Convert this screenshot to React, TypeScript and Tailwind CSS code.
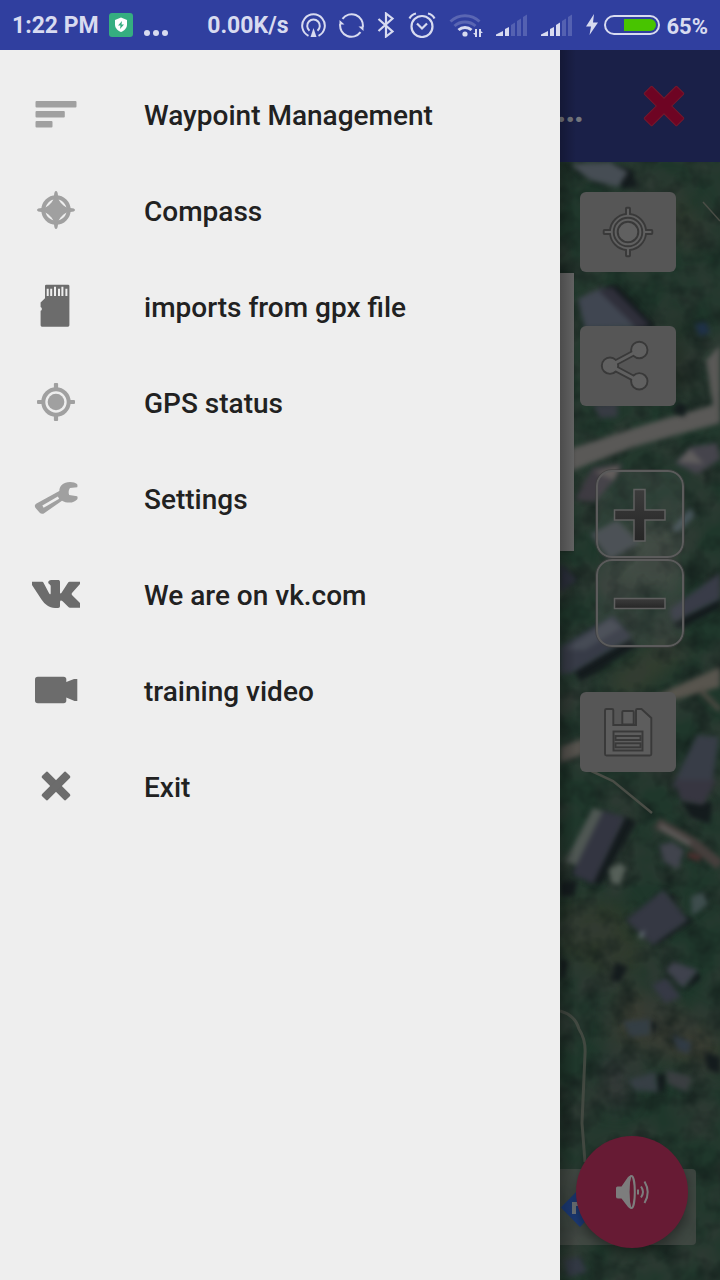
import type { ReactNode } from "react";

type MenuItem = {
  label: string;
  icon: ReactNode;
};

function MenuIcon({ dark = false, children }: { dark?: boolean; children: ReactNode }) {
  return (
    <svg
      aria-hidden="true"
      viewBox="0 0 48 48"
      className={dark ? "size-12 text-[#6c6c6c]" : "size-12 text-[#a0a0a0]"}
      fill="currentColor"
    >
      {children}
    </svg>
  );
}

const menuItems: MenuItem[] = [
  {
    label: "Waypoint Management",
    icon: (
      <MenuIcon>
        <rect x="3.5" y="11" width="41" height="6.5" rx="1" />
        <rect x="3.5" y="21" width="29.3" height="6.5" rx="1" />
        <rect x="3.5" y="31" width="17" height="6.5" rx="1" />
      </MenuIcon>
    ),
  },
  {
    label: "Compass",
    icon: (
      <MenuIcon>
        <circle cx="24" cy="24" r="12.7" fill="none" stroke="currentColor" strokeWidth="4" />
        <path d="M24 5q1.800 0 2 5 .4 4.500 2.500 6.500l3 3q2 2.100 6.500 2.500 5 .2 5 2t-5 2q-4.500.4-6.500 2.500l-3 3q-2.100 2-2.500 6.500-.2 5-2 5t-2-5q-.4-4.500-2.500-6.500l-3-3q-2-2.100-6.500-2.500-5-.2-5-2t5-2q4.500-.4 6.500-2.500l3-3q2.100-2 2.500-6.500.2-5 2-5z" />
      </MenuIcon>
    ),
  },
  {
    label: "imports from gpx file",
    icon: (
      <MenuIcon dark>
        <path d="M14.500 2.700H36a1.400 1.400 0 0 1 1.400 1.400V43.300a1.400 1.400 0 0 1-1.400 1.400H10a1.400 1.400 0 0 1-1.400-1.400V28.700a1.900 1.900 0 0 0 0-3.600V20.500L13 16.300V4.100a1.400 1.400 0 0 1 1.500-1.400z" />
        <path
          d="M15.700 6.700V14M19.200 6.700V14M23 4.700V14M27 6.700V14M30.400 4.700V14M34.400 6.700V14"
          stroke="#eeeeee"
          strokeWidth="2"
        />
      </MenuIcon>
    ),
  },
  {
    label: "GPS status",
    icon: (
      <MenuIcon>
        <circle cx="24" cy="24" r="12.7" fill="none" stroke="currentColor" strokeWidth="4" />
        <circle cx="24" cy="24" r="8.300" />
        <rect x="21.900" y="5" width="4.200" height="6" rx="1" />
        <rect x="21.900" y="37" width="4.200" height="6" rx="1" />
        <rect x="5" y="21.900" width="6" height="4.200" rx="1" />
        <rect x="37" y="21.900" width="6" height="4.200" rx="1" />
      </MenuIcon>
    ),
  },
  {
    label: "Settings",
    icon: (
      <MenuIcon>
        <path d="M38 8c3 0 5.500.7 7 2 .6.800.6 2.400.2 3.300L38 14c-1.400 1.800-1.800 5-.8 7l8 1.200c.6.900.5 2.400-.1 3.300-2 2-4.600 3.100-7.500 3.100-3.200 0-5.400-.7-7.600-1.900L12.500 39c-1.800 1.300-3.500 1.100-5-.5L3.600 34c-1.300-1.700-.9-3.400.9-4.500L27.300 17C27.500 11.500 31.500 8 38 8z" />
        <path d="M11 32.700L26.500 23.600" stroke="#eeeeee" strokeWidth="2.600" />
      </MenuIcon>
    ),
  },
  {
    label: "We are on vk.com",
    icon: (
      <MenuIcon dark>
        <path d="M0 11.700h10.200c.7 0 1 .4 1.300 1l5.300 10.100c.9 1.700 1.900 2.200 1.900.2v-7c0-1.500-2.500-2-2.500-3.500 0-1.400 1.200-2.500 3-2.500h6.500c1.500 0 2.300.5 2.300 2v10.400c0 1.400.8 1.500 1.700.2l6.300-9.900c.4-.7.9-1 1.600-1H48V14l-7.800 8.800c-.8 1-.8 1.600 0 2.500L48 33v4.700h-9.500c-1 0-1.600-.3-2.300-1l-5.600-5.500c-1.300-1.200-2.600-1-2.600 1V36c0 1.200-.6 1.900-2 1.900h-3C17 37.900 13 34.500 9.500 29.500L0 15z" />
      </MenuIcon>
    ),
  },
  {
    label: "training video",
    icon: (
      <MenuIcon dark>
        <rect x="3" y="10.700" width="31.300" height="26.600" rx="2.800" />
        <path d="M33 16.400l9-3.300a3 3 0 0 1 1-.2h2.300V35H43a3 3 0 0 1-1-.2L33 31z" />
      </MenuIcon>
    ),
  },
  {
    label: "Exit",
    icon: (
      <MenuIcon dark>
        <g transform="rotate(45 24 24)">
          <rect x="7" y="19.800" width="34" height="8.400" rx="1.600" />
          <rect x="19.800" y="7" width="8.400" height="34" rx="1.600" />
        </g>
      </MenuIcon>
    ),
  },
];

function SignalBars({ active }: { active: number }) {
  const bars = [
    "M0 22v-1.500L7 17v5z",
    "M9 22v-7l4-2v9z",
    "M15 22V11l4-2.500V22z",
    "M21 22V7l4-2.500V22z",
    "M27 22V3l4-2.500V22z",
  ];
  return (
    <svg aria-hidden="true" viewBox="0 0 32 22" className="h-[22px] w-8" fill="currentColor">
      {bars.map((d, i) => (
        <path key={d} d={d} opacity={i < active ? 1 : 0.22} />
      ))}
    </svg>
  );
}

function StatusBar() {
  return (
    <header className="flex h-[50px] shrink-0 items-center bg-[#303f9f] px-3 text-[23px] font-bold text-[#d8dbf0]">
      <span className="pt-[3px]">1:22 PM</span>
      <svg aria-hidden="true" viewBox="0 0 24 24" className="ml-[10px] size-6">
        <rect width="24" height="24" rx="3" fill="#35ae80" />
        <path d="M12 4.500l6 2.500v4.500c0 3.500-2.500 6-6 7.500-3.500-1.500-6-4-6-7.500V7z" fill="#ffffff" />
        <path d="M13 8l-4 4.500h2.500L11 16l4-4.500h-2.500z" fill="#35ae80" />
      </svg>
      <svg aria-hidden="true" viewBox="0 0 26 24" className="ml-[10px] h-6 w-[26px]" fill="currentColor">
        <circle cx="4" cy="20" r="3" />
        <circle cx="13" cy="20" r="3" />
        <circle cx="22" cy="20" r="3" />
      </svg>

      <div className="ml-auto flex items-center gap-[13px]">
        <span className="pt-[3px]">0.00K/s</span>
        <svg aria-hidden="true" viewBox="0 0 25 25" className="size-[25px]" fill="none" stroke="currentColor" strokeWidth="2">
          <path d="M7.500 22.800a11.300 11.300 0 1 1 10 0" />
          <path d="M8.500 17.700a6.300 6.300 0 1 1 8 0" />
          <path d="M12.500 15l3 9h-6z" fill="currentColor" stroke="none" />
        </svg>
        <svg aria-hidden="true" viewBox="0 0 25 25" className="size-[25px]" fill="none" stroke="currentColor" strokeWidth="2">
          <path d="M3.500 5.800a11.300 11.300 0 0 1 20.300 8.200" />
          <path d="M21.500 19.200A11.300 11.300 0 0 1 1.200 11" />
          <path d="M19.500 13.500h5V18zM5.500 11.500h-5V7z" fill="currentColor" stroke="none" />
        </svg>
        <svg aria-hidden="true" viewBox="0 0 18 26" className="h-[26px] w-[18px]" fill="none" stroke="currentColor" strokeWidth="2.200">
          <path d="M1.500 7l14 12.500L9 24.500v-23l6.500 5L1.500 19" />
        </svg>
        <svg aria-hidden="true" viewBox="0 0 28 26" className="h-[26px] w-7" fill="none" stroke="currentColor" strokeWidth="2.200">
          <circle cx="14" cy="14.500" r="10.500" />
          <path d="M9 11.500l5 5 5-5M1.500 6.500Q3.500 2.500 8 1.500M26.500 6.500Q24.500 2.500 20 1.500" />
        </svg>
        <svg aria-hidden="true" viewBox="0 0 34 26" className="h-[26px] w-[34px]" fill="none" stroke="currentColor" strokeWidth="3">
          <path d="M1.500 9.500a21.500 21.500 0 0 1 29 0M5.500 14a15.500 15.500 0 0 1 21 0" opacity="0.25" />
          <path d="M9.500 18a9.500 9.500 0 0 1 13 0" />
          <circle cx="16" cy="22" r="2.600" fill="currentColor" stroke="none" />
          <path d="M27 17v8M31 17v8" strokeWidth="2" />
          <path d="M24 21h3v3zM34 21h-3v-3z" fill="currentColor" stroke="none" />
        </svg>
        <SignalBars active={2} />
        <SignalBars active={3} />
        <div className="flex items-center gap-[6px]">
          <svg aria-hidden="true" viewBox="0 0 12 22" className="h-[22px] w-3" fill="currentColor">
            <path d="M8 0L0 12.500h5L3.500 21 12 8.500H7z" />
          </svg>
          <svg aria-hidden="true" viewBox="0 0 56 20" className="h-5 w-14">
            <rect x="1" y="1" width="54" height="18" rx="9" fill="none" stroke="currentColor" strokeWidth="2" />
            <path d="M20 4h26a6 6 0 0 1 0 12H20z" fill="#48c400" />
          </svg>
          <span className="pt-[3px] text-[22px]">65%</span>
        </div>
      </div>
    </header>
  );
}

/* Aerial imagery under the controls, already dimmed by the open drawer. */
function SatelliteMap() {
  return (
    <svg
      aria-hidden="true"
      viewBox="0 0 160 1118"
      preserveAspectRatio="xMidYMin slice"
      className="absolute inset-0 size-full"
    >
      <defs>
        <filter id="soft" x="-20%" y="-20%" width="140%" height="140%" colorInterpolationFilters="sRGB">
          <feGaussianBlur stdDeviation="2.4" />
        </filter>
        <filter id="haze" x="-50%" y="-50%" width="200%" height="200%" colorInterpolationFilters="sRGB">
          <feGaussianBlur stdDeviation="10" />
        </filter>
        <filter id="foliage" x="0" y="0" width="100%" height="100%" colorInterpolationFilters="sRGB">
          <feTurbulence type="fractalNoise" baseFrequency="0.04" numOctaves="3" seed="8" />
          <feColorMatrix values="0 0 0 0 0.07  0 0 0 0 0.11  0 0 0 0 0.1  1.500 0 0 0 -0.62" />
        </filter>
        <filter id="clearing" x="0" y="0" width="100%" height="100%" colorInterpolationFilters="sRGB">
          <feTurbulence type="fractalNoise" baseFrequency="0.025" numOctaves="3" seed="21" />
          <feColorMatrix values="0 0 0 0 0.2  0 0 0 0 0.23  0 0 0 0 0.21  0 1.600 0 0 -0.55" />
        </filter>
      </defs>
      <rect width="160" height="1118" fill="#1f372b" />
      <g filter="url(#haze)">
        <path d="M60 360h60v70H50z" fill="#3a473d" />
        <path d="M40 520l70-50 20 20-60 50z" fill="#343e30" />
        <path d="M0 740h60l30 60-40 20-50-30z" fill="#2f3a2b" />
        <path d="M60 820l100 50v40L50 880z" fill="#3a3c31" />
        <path d="M40 895h30v50H45z" fill="#353839" />
        <path d="M110 20l40 50-20 20-40-30z" fill="#2f3a2e" />
        <path d="M115 140l20 90h-30z" fill="#232a22" />
      </g>
      <rect width="160" height="1118" filter="url(#clearing)" />
      <rect width="160" height="1118" filter="url(#foliage)" />

      {/* roads and paths */}
      <g filter="url(#soft)">
        <path d="M0 290L90 261 153 243 146 198 160 183V261L73 285 14 308 0 311z" fill="#5a5957" />
        <path d="M88 537L160 505V525L117 537z" fill="#58554e" />
        <path d="M140 528L160 548" stroke="#4d4a43" strokeWidth="5" />
        <path d="M0 585L24 576V592L0 601z" fill="#55524d" />
        <path d="M97 661L133 681 160 703" fill="none" stroke="#463f3d" strokeWidth="11" />
        <path d="M100 664L130 682" stroke="#5c5a58" strokeWidth="5" />
        <path d="M128 692l12 5" stroke="#553030" strokeWidth="5" />
      </g>
      <g fill="none" stroke="#4a4d46">
        <path d="M25 606L53 619 92 651" strokeWidth="2.500" />
        <path d="M143 40L160 59" strokeWidth="1.500" />
        <path d="M0 849Q15 853 19 867 26 878 25 892L22 961 25 1000" strokeWidth="3" opacity="0.8" />
      </g>

      {/* shadows */}
      <g filter="url(#soft)" fill="#141b1d">
        <path d="M50 2L72 8 78 25 62 27z" />
        <path d="M44 125L58 123 96 165 80 168z" />
        <path d="M14 508L70 476 76 485 20 520z" />
        <path d="M113 460L160 436V446L118 468z" />
        <path d="M64 654L76 660 40 724 30 718z" />
        <path d="M122 640L152 640 150 662 130 655z" />
        <path d="M0 720L18 718 14 734 0 735z" />
        <path d="M104 728L116 735 114 742z" />
        <path d="M127 757L135 757 97 782 92 779z" />
        <path d="M137 808L141 817 123 830z" />
        <path d="M0 795L8 800 4 815 0 818z" />
        <path d="M55 800L68 805 60 820 52 818z" />
        <path d="M90 858L97 862 93 876z" />
        <path d="M97 912L107 912 103 930 96 928z" />
        <path d="M145 890L160 895V912L147 907z" />
        <path d="M118 240L127 244 124 255 113 250z" />
      </g>

      {/* buildings */}
      <g filter="url(#soft)">
        <path d="M10 2L50 0 68 10 58 25 30 18z" fill="#464d54" />
        <path d="M18 137L43 125 83 165 25 167z" fill="#404651" />
        <path d="M38 128L52 125 90 163 78 167z" fill="#2f2f3a" />
        <path d="M135 162L146 160 150 171 139 174z" fill="#1f3147" />
        <path d="M33 243L57 240 58 255 40 256z" fill="#373b43" />
        <path d="M15 338L33 305 63 302 56 316 35 340z" fill="#3e3b42" />
        <path d="M34 310L60 303 54 318z" fill="#605b59" />
        <path d="M115 301L130 285 157 281 160 297 137 312z" fill="#45444c" />
        <path d="M118 300L130 287 144 302z" fill="#5f5d5d" />
        <path d="M30 372L57 358 79 381 50 398z" fill="#454b50" />
        <path d="M111 367L130 346 135 354 118 370z" fill="#465459" />
        <path d="M110 447L160 411V437L113 460z" fill="#393c48" />
        <path d="M0 401L17 418 0 430z" fill="#2b2f3b" />
        <path d="M0 485L53 453 72 475 12 511 0 512z" fill="#373b47" />
        <path d="M5 487L50 457 62 465 25 488z" fill="#464b55" />
        <path d="M112 625L137 573 159 575 151 630z" fill="#383d47" />
        <path d="M5 700L33 646 46 650 22 705z" fill="#4f5753" />
        <path d="M43 649L65 655 33 722 12 712z" fill="#333541" />
        <path d="M49 707L60 701 66 706 60 723 51 721z" fill="#566059" />
        <path d="M115 618L156 618 143 643 121 638z" fill="#373641" />
        <path d="M99 683L112 680 124 688 118 707 104 700z" fill="#41444d" />
        <path d="M66 758L103 728 128 758 93 783z" fill="#353843" />
        <path d="M78 773L85 768 82 777z" fill="#6b767c" />
        <path d="M131 735L143 730 148 742 132 754z" fill="#3e4d4d" />
        <path d="M106 808L113 800 138 808 123 826z" fill="#3f424d" />
        <path d="M92 823L106 816 121 835 105 841z" fill="#363945" />
        <path d="M63 859L90 857 90 873 70 875z" fill="#343e44" />
        <path d="M68 918L95 910 98 930 75 928z" fill="#373f45" />
        <path d="M106 908L132 915 127 930 108 922z" fill="#3a3e41" />
        <path d="M112 873L131 880 129 892 118 888z" fill="#313b45" />
        <path d="M4 1098L20 1095 27 1110 8 1115z" fill="#323843" />
      </g>
    </svg>
  );
}

const tileClass =
  "flex h-20 w-24 items-center justify-center rounded-md bg-[#565656]";
const zoomClass =
  "ml-4 size-[88px] rounded-2xl border-2 border-[#5b5b5b] bg-[#7a7a7a]/15 outline outline-[#3c3c3c]/60";

function ZoomIcon({ plus = false }: { plus?: boolean }) {
  const id = plus ? "zoom-in-fill" : "zoom-out-fill";
  return (
    <svg aria-hidden="true" viewBox="2 2 84 84" className="size-full">
      <defs>
        <linearGradient id={id} x1="0" y1="0" x2="0" y2="1">
          <stop offset="0" stopColor="#3c3c3c" />
          <stop offset="1" stopColor="#262626" />
        </linearGradient>
      </defs>
      <path
        d={plus ? "M38 19.500h11V40h20v10H49v21H38V50H18.500V40H38z" : "M18.500 39.500H69v10H18.500z"}
        fill={`url(#${id})`}
        stroke="#5f5f5f"
        strokeWidth="1.500"
      />
    </svg>
  );
}

function MapControls() {
  return (
    <div className="relative flex flex-col px-5 pt-[30px]">
      <button type="button" aria-label="My location" className={tileClass}>
        <svg aria-hidden="true" viewBox="0 0 52 52" className="size-[52px]" fill="#606060" stroke="#393939" strokeWidth="1.900">
          <path d="M24 8V2.500q0-.8.800-.8h2.400q.8 0 .8.800V8A18.300 18.300 0 0 1 44 24h5.500q.8 0 .8.800v2.400q0 .8-.8.800H44A18.300 18.300 0 0 1 28 44v5.500q0 .8-.8.800h-2.400q-.8 0-.8-.8V44A18.300 18.300 0 0 1 8 28H2.500q-.8 0-.8-.8v-2.400q0-.8.800-.8H8A18.300 18.300 0 0 1 24 8z" />
          <circle cx="26" cy="26" r="14.300" />
          <circle cx="26" cy="26" r="10.300" strokeWidth="2" />
        </svg>
      </button>
      <button type="button" aria-label="Share" className={`${tileClass} mt-[54px]`}>
        <svg aria-hidden="true" viewBox="0 0 96 80" className="h-20 w-24">
          <path d="M59.300 24L30 39.700l29.300 15.600" fill="none" stroke="#393939" strokeWidth="6.500" />
          <g fill="#606060" stroke="#393939" strokeWidth="1.900">
            <circle cx="30" cy="39.700" r="8.200" />
            <circle cx="59.300" cy="24" r="8.200" />
            <circle cx="59.300" cy="55.300" r="8.200" />
          </g>
          <path d="M57 25.300L30 39.700l27 14.300" fill="none" stroke="#606060" strokeWidth="3" />
        </svg>
      </button>
      <button type="button" aria-label="Zoom in" className={`${zoomClass} mt-16`}>
        <ZoomIcon plus />
      </button>
      <button type="button" aria-label="Zoom out" className={`${zoomClass} mt-px`}>
        <ZoomIcon />
      </button>
      <button type="button" aria-label="Save" className={`${tileClass} mt-[45px]`}>
        <svg aria-hidden="true" viewBox="0 0 96 80" className="h-20 w-24" fill="#5d5d5d" stroke="#393939" strokeWidth="1.900">
          <path d="M26.500 17H32q1.300 0 1.300 1.300V33H56V18.300q0-1.300 1.300-1.300h4.200l9.800 9V62q0 1.500-1.500 1.500H26.500Q25 63.500 25 62V18.500Q25 17 26.500 17z" />
          <rect x="42.300" y="19" width="11.400" height="13.500" rx="1" />
          <rect x="33.500" y="39.500" width="29" height="19" />
          <rect x="35.500" y="44" width="25" height="4" />
          <rect x="35.500" y="51.300" width="25" height="4" />
        </svg>
      </button>
    </div>
  );
}

function MapScreen() {
  return (
    <main className="relative flex w-40 shrink-0 flex-col">
      <div className="flex h-28 shrink-0 items-center bg-[#1a2048]">
        <div className="flex w-6 justify-end pt-1.5 text-[40px] leading-none font-medium text-[#75777d]">
          <span>…</span>
        </div>
        <button type="button" aria-label="Close" className="mr-8 ml-auto size-12">
          <svg aria-hidden="true" viewBox="0 0 48 48" className="size-12">
            <g transform="rotate(45 24 24)" fill="#6e0423" stroke="#74182c" strokeWidth="1">
              <path d="M19.500 1h9q1 0 1 1v16.500H46q1 0 1 1v9q0 1-1 1H29.500V46q0 1-1 1h-9q-1 0-1-1V29.500H2q-1 0-1-1v-9q0-1 1-1h16.500V2q0-1 1-1z" />
            </g>
          </svg>
        </button>
      </div>

      <div className="relative flex flex-1 flex-col">
        <SatelliteMap />
        <div className="absolute top-[111px] left-0 h-[278px] w-[14px] bg-[#656565] shadow-sm" />
        <MapControls />

        <div className="relative mt-auto mr-6 mb-[35px] h-[76px] rounded-r-sm bg-[#4a4e4a]/70">
          <svg aria-hidden="true" viewBox="0 0 40 76" className="h-full w-10">
            <path d="M20 19l19 19.500-19 19.500L.8 38.500z" fill="#1c3a75" />
            <path d="M14 45V35h10" fill="none" stroke="#71777c" strokeWidth="4" />
          </svg>
        </div>
        <button
          type="button"
          aria-label="Sound"
          className="absolute right-8 bottom-8 size-28 rounded-full bg-[#671b34] shadow-[0_6px_12px_rgba(0,0,0,.35)]"
        >
          <svg aria-hidden="true" viewBox="0 0 112 112" className="size-28" fill="none" stroke="#7d7d7d" strokeWidth="2">
            <path d="M40 52q0-1.500 1.500-1.500h4L52 41q2-2 3-1.500-3 16 0 33-1.500 0-3-1.500l-6.500-8.500h-3Q40 62.500 40 61z" fill="#7d7d7d" stroke="none" />
            <ellipse cx="55.500" cy="56" rx="3.300" ry="16" />
            <path d="M62 53.500v5M65 50.500q4 5.500 0 11M68.500 45.500q6.500 11 0 21.500" />
          </svg>
        </button>
      </div>

      <div className="pointer-events-none absolute inset-y-0 left-0 w-4 bg-linear-to-r from-black/25 to-transparent" />
    </main>
  );
}

export default function App() {
  return (
    <div className="flex min-h-screen flex-col bg-[#eeeeee] font-[Roboto,sans-serif]">
      <StatusBar />
      <div className="flex flex-1">
        <nav aria-label="Main menu" className="relative z-10 flex-1 bg-[#eeeeee] pt-4">
          <ul>
            {menuItems.map((item) => (
              <li key={item.label}>
                <a
                  href="#"
                  className="flex h-24 items-center gap-16 px-8 text-[28px] font-medium text-[#212121]"
                >
                  {item.icon}
                  <span className="pt-1">{item.label}</span>
                </a>
              </li>
            ))}
          </ul>
        </nav>
        <MapScreen />
      </div>
    </div>
  );
}
